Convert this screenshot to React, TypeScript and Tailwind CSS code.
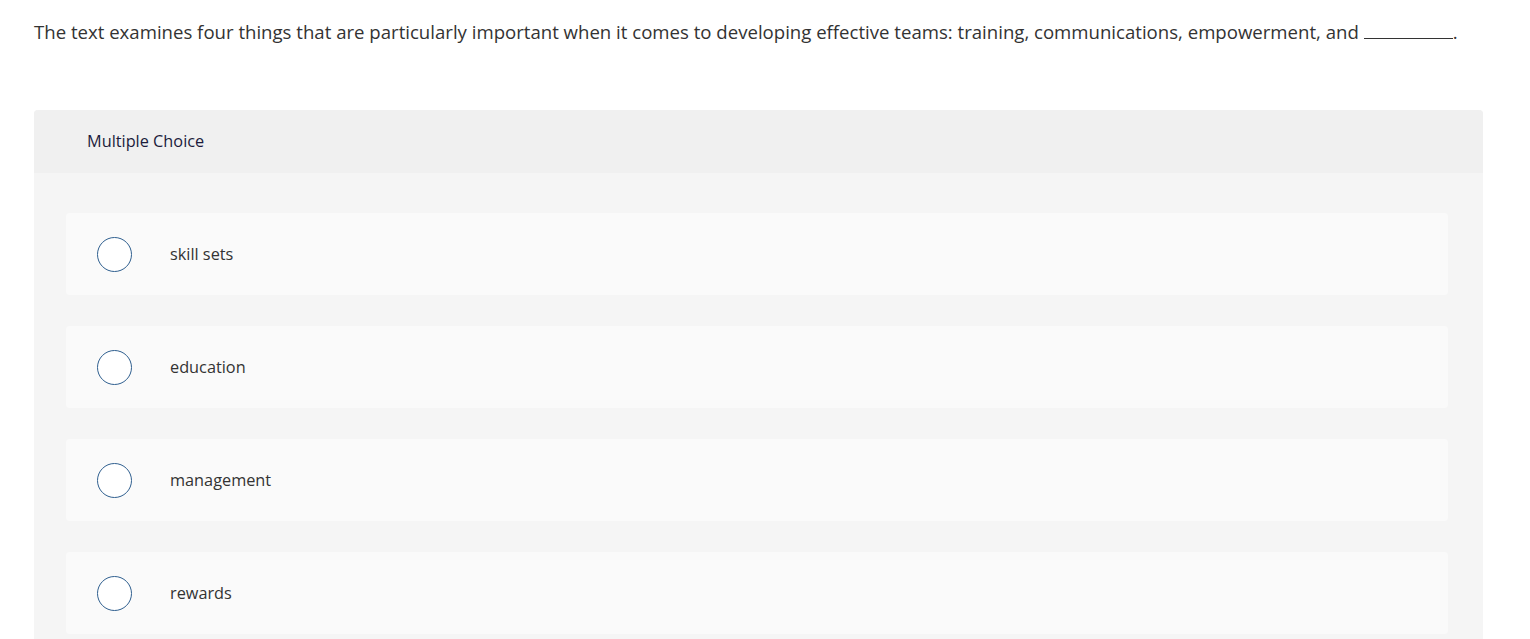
export default function App() {
  const options = ["skill sets", "education", "management", "rewards"];
  return (
    <div className="min-h-screen bg-white" style={{ fontFamily: "'Open Sans', sans-serif" }}>
      <div className="pl-[34px] pr-[47px]">
        <p className="pt-[19px] text-[18.6px] leading-[26px] text-[#333333]">
          The text examines four things that are particularly important when it comes to developing effective teams: training, communications, empowerment, and{" "}
          <span className="inline-block w-[89px] border-b border-[#333333] align-baseline"></span>.
        </p>
        <div className="mt-[65px] rounded-t-[4px] bg-[#f5f5f5]">
          <div className="flex h-[63px] items-center rounded-t-[4px] bg-[#f0f0f0] pl-[53px] text-[16.3px] text-[#1c1c3c]">
            Multiple Choice
          </div>
          <div className="flex flex-col gap-[31px] pl-[32px] pr-[35px] pt-[40px] pb-[20px]">
            {options.map((o) => (
              <div key={o} className="flex h-[82px] items-center rounded-[4px] bg-[#fafafa] pl-[31px]">
                <div className="h-[35px] w-[35px] shrink-0 rounded-full border-[1.5px] border-[#2f5f8f] bg-white"></div>
                <span className="ml-[38px] text-[16.3px] text-[#333333]">{o}</span>
              </div>
            ))}
          </div>
        </div>
      </div>
    </div>
  );
}
